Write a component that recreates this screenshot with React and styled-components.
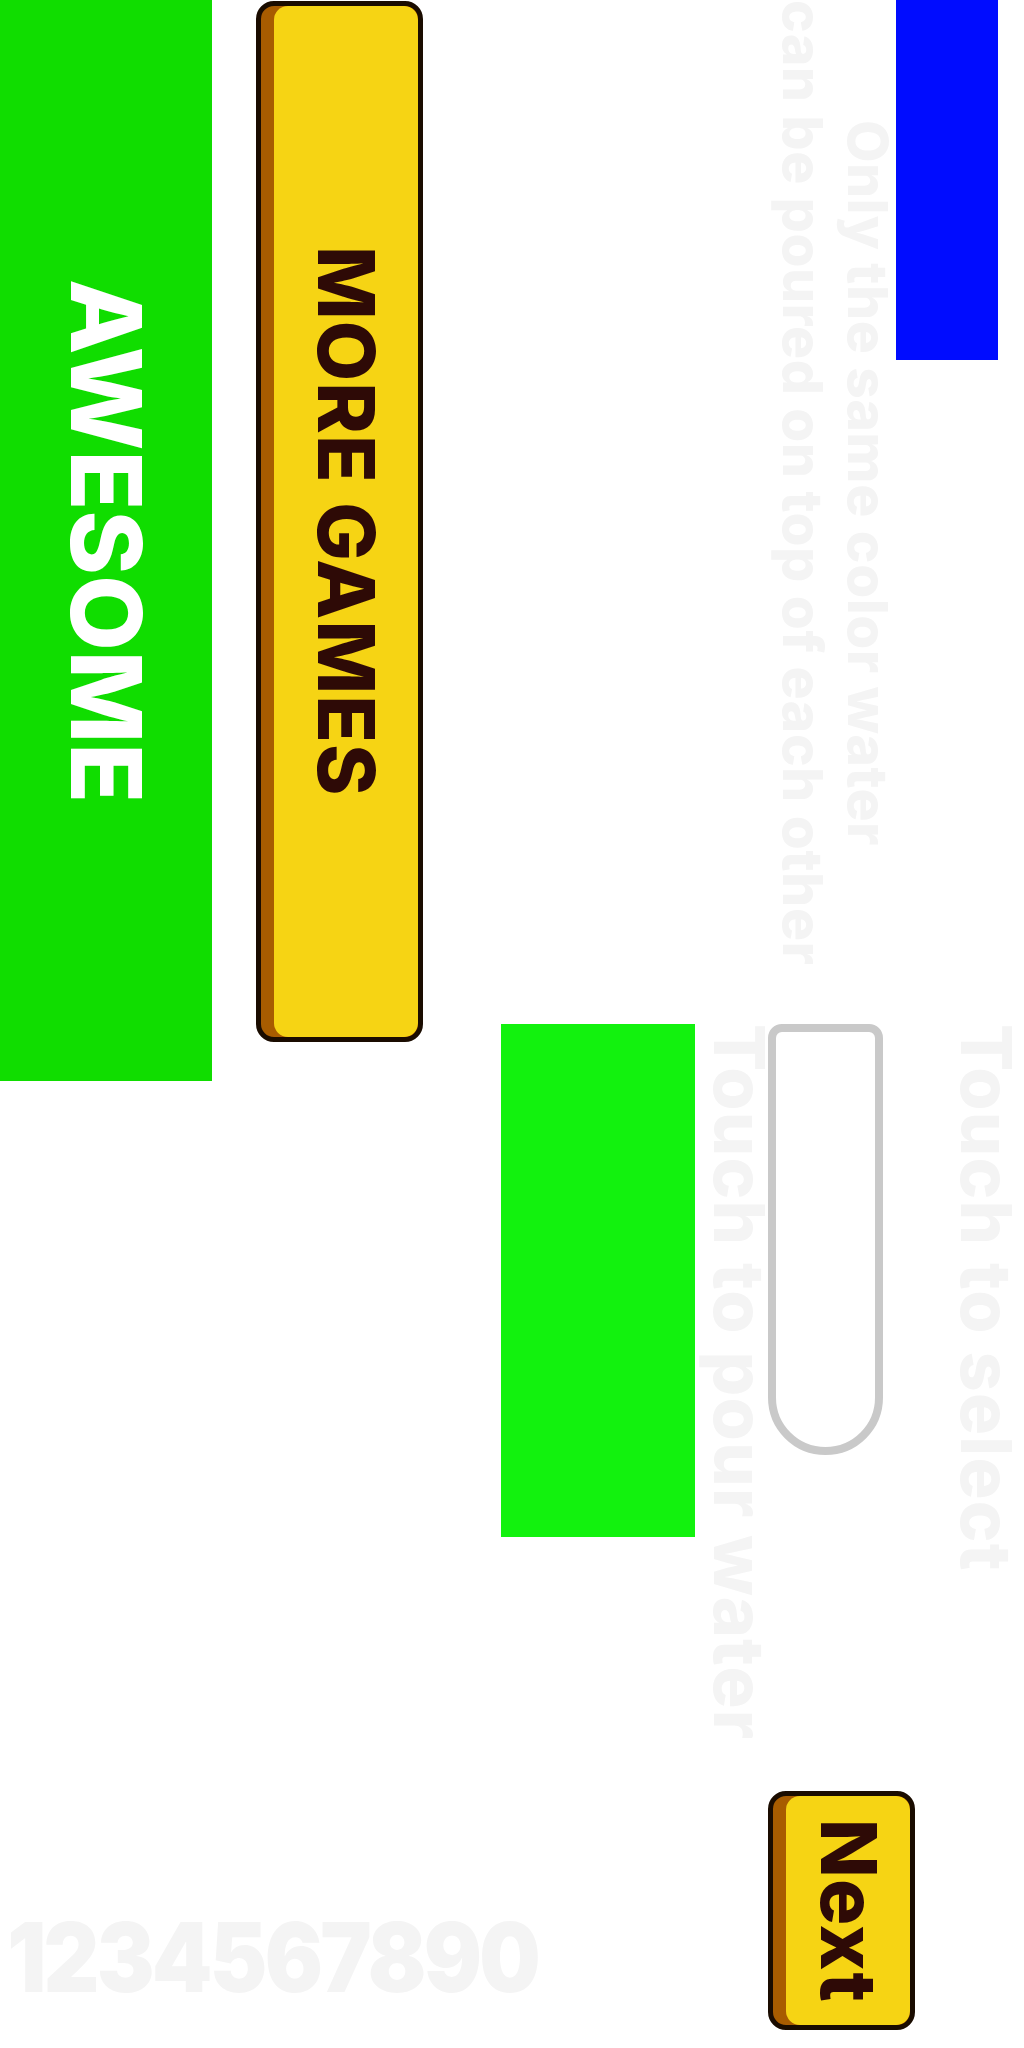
import React from 'react'
import styled, { createGlobalStyle } from 'styled-components'

const GlobalStyle = createGlobalStyle`
  html, body {
    margin: 0;
    padding: 0;
    background: #ffffff;
  }
  body {
    font-family: Inter, "Noto Sans", sans-serif;
  }
`

const Page = styled.div`
  width: 1024px;
  height: 2048px;
  display: flex;
  overflow: hidden;
`

const LeftCol = styled.div`
  width: 501px;
  flex-shrink: 0;
  display: flex;
  flex-direction: column;
`

const TopRow = styled.div`
  display: flex;
  align-items: flex-start;
  gap: 44px;
`

const Banner = styled.div`
  width: 212px;
  height: 1081px;
  background: #10dd00;
  display: flex;
  align-items: center;
  justify-content: center;
`

const BannerTitle = styled.span`
  writing-mode: vertical-rl;
  font-family: Inter, sans-serif;
  font-weight: 800;
  font-size: 98px;
  line-height: 98px;
  color: #ffffff;
  white-space: nowrap;
`

const GameButton = styled.div`
  box-sizing: border-box;
  width: ${props => props.w}px;
  height: ${props => props.h}px;
  margin-top: ${props => props.top || 0}px;
  border: 5px solid #1a0c00;
  border-radius: 18px;
  background: #a85c00;
  padding-left: 13px;
  display: flex;
  overflow: hidden;
`

const ButtonFace = styled.div`
  flex: 1;
  background: #f6d414;
  border-radius: 14px;
  display: flex;
  align-items: center;
  justify-content: center;
`

const ButtonLabel = styled.span`
  writing-mode: vertical-rl;
  font-family: Inter, sans-serif;
  font-weight: 800;
  font-size: ${props => props.size}px;
  line-height: ${props => props.size}px;
  letter-spacing: ${props => props.spacing || 0}px;
  color: #2e0a06;
  white-space: nowrap;
`

const Digits = styled.div`
  margin-top: auto;
  margin-bottom: 43px;
  padding-left: 8px;
  font-family: Inter, sans-serif;
  font-weight: 900;
  font-size: 96px;
  line-height: 96px;
  letter-spacing: -3px;
  color: #f4f4f4;
  white-space: nowrap;
  transform: scaleX(0.9);
  transform-origin: left center;
`

const RightCol = styled.div`
  flex: 1;
  display: flex;
  flex-direction: column;
`

const RightTop = styled.div`
  height: 1024px;
  display: flex;
  justify-content: flex-end;
  align-items: flex-start;
`

const RuleText = styled.div`
  writing-mode: vertical-rl;
  font-family: Inter, sans-serif;
  font-weight: 800;
  font-size: 55px;
  line-height: 65px;
  letter-spacing: 0.7px;
  text-align: center;
  color: #f4f4f4;
  white-space: nowrap;
  margin-right: 2px;
`

const ColorBlock = styled.div`
  width: ${props => props.w}px;
  height: ${props => props.h}px;
  background: ${props => props.color};
  flex-shrink: 0;
`

const BlueBlock = styled(ColorBlock)`
  margin-right: 26px;
  margin-left: -6px;
`

const RightBottom = styled.div`
  flex: 1;
  display: flex;
  align-items: flex-start;
`

const HintText = styled.div`
  writing-mode: vertical-rl;
  font-family: Inter, sans-serif;
  font-weight: 800;
  font-size: 70px;
  line-height: 57px;
  letter-spacing: 1.3px;
  color: #f4f4f4;
  white-space: nowrap;
  margin-left: ${props => props.gap}px;
`

const TubeColumn = styled.div`
  align-self: stretch;
  width: 147px;
  display: flex;
  flex-direction: column;
  justify-content: space-between;
  padding-bottom: 18px;
`

const Tube = styled.div`
  box-sizing: border-box;
  width: 115px;
  height: 431px;
  border: 8px solid #c9c9c9;
  border-radius: 14px 14px 58px 58px;
  background: #ffffff;
`

export default function App() {
  return (
    <>
      <GlobalStyle />
      <Page>
        <LeftCol>
          <TopRow>
            <Banner>
              <BannerTitle>AWESOME</BannerTitle>
            </Banner>
            <GameButton w={167} h={1041} top={1}>
              <ButtonFace>
                <ButtonLabel size={78} spacing={1.2}>MORE GAMES</ButtonLabel>
              </ButtonFace>
            </GameButton>
          </TopRow>
          <Digits>1234567890</Digits>
        </LeftCol>

        <RightCol>
          <RightTop>
            <RuleText>
              Only the same color water
              <br />
              can be poured on top of each other
            </RuleText>
            <BlueBlock w={102} h={360} color="#000cff" />
          </RightTop>

          <RightBottom>
            <ColorBlock w={194} h={513} color="#12f20e" />
            <HintText gap={16}>Touch to pour water</HintText>
            <TubeColumn>
              <Tube />
              <GameButton w={147} h={239}>
                <ButtonFace>
                  <ButtonLabel size={77} spacing={1}>Next</ButtonLabel>
                </ButtonFace>
              </GameButton>
            </TubeColumn>
            <HintText gap={43}>Touch to select</HintText>
          </RightBottom>
        </RightCol>
      </Page>
    </>
  )
}
